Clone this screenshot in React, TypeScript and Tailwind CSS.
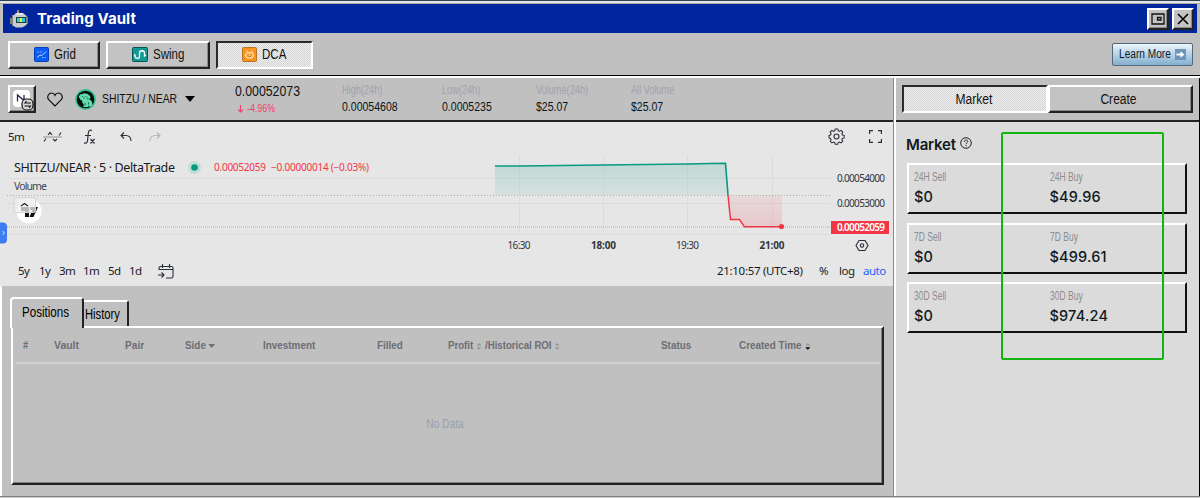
import type { ReactNode } from 'react';
import clsx from 'clsx';

const raised =
  'border-2 border-t-white border-l-white border-r-[#222] border-b-[#222] shadow-[inset_-1px_-1px_0_#8a8a8a] bg-[#c3c3c3]';
const pressed =
  'border-2 border-t-[#2b2b2b] border-l-[#2b2b2b] border-r-white border-b-white bg-[repeating-conic-gradient(#d2d2d2_0_25%,#f1f1f1_0_50%)] bg-[length:2px_2px]';
const pixel = 'font-["Liberation_Sans",Arial,sans-serif]';
// condensed look of the desktop font
const narrow = 'block origin-left scale-x-[0.8] whitespace-nowrap';

const stats = [
  { label: 'High(24h)', value: '0.00054608', width: 'w-[100px]' },
  { label: 'Low(24h)', value: '0.0005235', width: 'w-[94px]' },
  { label: 'Volume(24h)', value: '$25.07', width: 'w-[95px]' },
  { label: 'All Volume', value: '$25.07', width: 'w-[95px]' },
];

const markets = [
  { period: '24H', sell: '$0', buy: '$49.96' },
  { period: '7D', sell: '$0', buy: '$499.61' },
  { period: '30D', sell: '$0', buy: '$974.24' },
];

const ranges = [
  { label: '5y', width: 'w-[21px]' },
  { label: '1y', width: 'w-[20px]' },
  { label: '3m', width: 'w-[24px]' },
  { label: '1m', width: 'w-[25px]' },
  { label: '5d', width: 'w-[21px]' },
  { label: '1d', width: 'w-[29px]' },
];

function RobotIcon() {
  return (
    <svg width="20" height="20" viewBox="0 0 20 20">
      <path d="M8 2h2v3H8z" fill="#9a9f9e" />
      <path d="M8 1h2v2H8z" fill="#e0755c" />
      <path d="M1 9h2V6h2v11H3v-2H1z" fill="#7f8584" />
      <path d="M7 4h7l3 2.500 1.500 2v6L16 17l-3 1.500H7L4 16.500V7z" fill="#c9cccb" />
      <path d="M8 4h5l2 1.500H7z" fill="#eef0ef" />
      <path d="M7 8h10.500v6H7z" fill="#17413f" />
      <path d="M8 9h3v4H8z" fill="#3fc9b8" />
      <path d="M11 9h2v4h-2z" fill="#f1e64a" />
      <path d="M13 9h3v4h-3z" fill="#27c0dd" />
    </svg>
  );
}

function GridIcon() {
  return (
    <svg width="15" height="15" viewBox="0 0 15 15">
      <rect x=".5" y=".5" width="14" height="14" rx="1" fill="#0b5cf4" stroke="#073fb8" />
      <path d="M3 10.500l3-2.500 2 .5 4-4" fill="none" stroke="#c4dcff" />
      <path d="M3 5h2M6 5h2M8 10.500h2M11 10.500h1" fill="none" stroke="#7eaeff" />
    </svg>
  );
}

function SwingIcon() {
  return (
    <svg width="16" height="15" viewBox="0 0 16 15">
      <rect x=".5" y=".5" width="15" height="14" rx="1" fill="#119994" stroke="#075653" />
      <path d="M2 8h1v1.500C3.500 12 7.500 12 7.500 9.500V6c0-3 5-3 5 0v3l1.500-1" fill="none" stroke="#fff" strokeWidth="1.3" />
    </svg>
  );
}

function DcaIcon() {
  return (
    <svg width="15" height="15" viewBox="0 0 15 15">
      <rect x=".5" y=".5" width="14" height="14" rx="1" fill="#f8941d" stroke="#b67525" />
      <path d="M5 5.500h5l1.500 1.500v2.500L10 11H5L3.500 9.500V7zM5 5V3.500M10 5V3.500" fill="#fbb765" stroke="#ffe2b8" />
      <path d="M6 7v1.500M9 7v1.500M6 9.500h3" stroke="#e67c07" fill="none" />
    </svg>
  );
}

function ShitzuIcon() {
  return (
    <svg width="21" height="21" viewBox="0 0 21 21">
      <circle cx="10.5" cy="10.5" r="9.6" fill="#06110f" stroke="#35c08f" strokeWidth="1.6" />
      <path d="M3.500 8L5 5.500 7.500 5l2-.8 3 .8L15 7l.5 2-1.500 1 2.500 2 .8 2v3l-3 .8-.3-1.300-1 1.500H8l1-2-1.500-2L7 11.500 5.500 11 4.500 9z" fill="#62dca9" />
      <path d="M7 7.500h1M10.500 7.500h1M8.500 9h1.500M12.500 8.500l.5 2M10 14v2.500M13.500 13.500v2" stroke="#0b4836" strokeWidth=".8" fill="none" />
    </svg>
  );
}

function ToolButton({ icon, children, active, className, labelClass }: { icon: ReactNode; children: ReactNode; active?: boolean; className: string; labelClass: string }) {
  return (
    <button className={clsx('flex h-[28px] items-center justify-center gap-[5px] text-[15px] text-[#111]', pixel, active ? pressed : raised, className)}>
      {icon}
      <span className={clsx('block origin-left scale-x-[0.77] whitespace-nowrap', labelClass)}>{children}</span>
    </button>
  );
}

function Sorter({ active }: { active?: boolean }) {
  return (
    <svg className="mx-1 inline-block" width="6" height="7" viewBox="0 0 5 7" preserveAspectRatio="none">
      <path d="M0 2.5L2.5 0 5 2.5z" fill="#96969c" />
      <path d="M0 4.2L2.5 6.8 5 4.2z" fill={active ? '#000' : '#96969c'} />
    </svg>
  );
}

function TitleBar() {
  return (
    <div className="mr-[3px] ml-[3px] flex h-[29px] shrink-0 items-center bg-[#00259d] pr-[3px] pl-[6px]">
      <RobotIcon />
      <h1 className="ml-2 pt-[1px] font-['Inter',sans-serif] text-[15px] font-bold tracking-[0.1px] text-white">Trading Vault</h1>
      <button className={clsx('ml-auto flex h-[22px] w-[22px] items-center justify-center', raised)}>
        <svg width="14" height="12" viewBox="0 0 14 12" fill="none" stroke="#111" strokeWidth="1.3">
          <path d="M1 1h12v10H1z" />
          <path d="M6.5 4.5h3.5v2.5H6.5z" />
        </svg>
      </button>
      <button className={clsx('ml-[3px] flex h-[22px] w-[22px] items-center justify-center', raised)}>
        <svg width="12" height="12" viewBox="0 0 12 12" stroke="#000" strokeWidth="1.6">
          <path d="M1 1l10 10M11 1L1 11" />
        </svg>
      </button>
    </div>
  );
}

function PairBar() {
  return (
    <div className={clsx('flex h-[42px] items-center bg-[#c0c0c0] pl-2', pixel)}>
      <button className={clsx('flex h-[28px] w-[28px] items-center justify-center', raised)}>
        <svg width="24" height="24" viewBox="0 0 24 24">
          <rect x="3" y="3" width="17" height="17" rx="4" fill="#fff" />
          <path d="M7.500 14.500V8l6.500 5.500V8" fill="none" stroke="#25234c" strokeWidth="1.3" />
          <rect x="12" y="12" width="11" height="11" rx="4.500" fill="#d6d6d6" stroke="#111" strokeWidth="1.2" />
          <path d="M21 16h-6l1.500-2M14.500 19h6L19 21" fill="none" stroke="#111" strokeWidth="1.1" />
        </svg>
      </button>
      <svg className="ml-[11px]" width="16" height="15" viewBox="0 0 16 15" fill="none" stroke="#111" strokeWidth="1.2">
        <path d="M8 14L1.500 7.500C-.5 4 2 1 4.500 1 6 1 7.500 2 8 3.200 8.500 2 10 1 11.500 1 14 1 16.500 4 14.500 7.500z" />
      </svg>
      <div className="ml-[12px]"><ShitzuIcon /></div>
      <div className="ml-[6px] w-[83px] text-[13px] text-[#111]">
        <span className={narrow}>SHITZU / NEAR</span>
      </div>
      <svg width="10" height="6" viewBox="0 0 10 6"><path d="M0 0h10L5 6z" /></svg>
      <div className="ml-[40px] w-[107px] shrink-0 pt-[1px]">
        <div className="text-[15px] leading-[18px] text-[#111]">
          <span className="block origin-left scale-x-[0.82] whitespace-nowrap">0.00052073</span>
        </div>
        <div className="flex items-center pl-[3px] text-[11.5px] leading-[17px] text-[#f0406c]">
          <svg className="mr-[4px]" width="5" height="8" viewBox="0 0 5 8" fill="none" stroke="currentColor" strokeWidth="1.2"><path d="M2.500 0v7M0 4.500L2.500 7 5 4.500" /></svg>
          <span className="block origin-left scale-x-[0.77] whitespace-nowrap">-4.96%</span>
        </div>
      </div>
      {stats.map((s) => (
        <div key={s.label} className={s.width}>
          <div className="text-[12px] leading-[15px] text-[#a2a2aa]"><span className="block origin-left scale-x-[0.765] whitespace-nowrap">{s.label}</span></div>
          <div className="text-[13px] leading-[17px] text-[#0b1419]"><span className="block origin-left scale-x-[0.81] whitespace-nowrap">{s.value}</span></div>
        </div>
      ))}
    </div>
  );
}

function PriceChart() {
  return (
    <svg className="block font-['Noto_Sans',sans-serif]" width="893" height="102" viewBox="0 154 893 102">
      <defs>
        <linearGradient id="up" x1="0" y1="0" x2="0" y2="1">
          <stop offset="0" stopColor="#089981" stopOpacity=".17" />
          <stop offset="1" stopColor="#089981" stopOpacity=".07" />
        </linearGradient>
        <linearGradient id="down" x1="0" y1="0" x2="0" y2="1">
          <stop offset="0" stopColor="#f23645" stopOpacity=".07" />
          <stop offset="1" stopColor="#f23645" stopOpacity=".17" />
        </linearGradient>
      </defs>
      <path d="M7 178.500h823M7 203.500h823M7 234.500h823M519.500 155v79M603.500 155v79M687.500 155v79M772.500 155v79" stroke="#dcdcde" fill="none" />
      <path d="M495 166L603 165 687 164 726 163 728 195H495z" fill="url(#up)" />
      <path d="M728 195h54v32h-38l-5-7h-9z" fill="url(#down)" />
      <path d="M7 195.500h823" stroke="#acacac" strokeDasharray="1 2" />
      <path d="M7 227h823" stroke="#f4777f" strokeDasharray="1 1" opacity=".75" />
      <path d="M495 166h25l83-1 84-1 23-.5 15.500-.3L728 195" fill="none" stroke="#089981" strokeWidth="1.6" />
      <path d="M728 195l2.500 24.500h9l5 7.300H782" fill="none" stroke="#f23645" strokeWidth="1.5" />
      <circle cx="781.500" cy="226.500" r="2.600" fill="#f23645" />
      <g fill="#33353b" fontSize="10">
        <text x="837" y="182" textLength="48">0.00054000</text>
        <text x="837" y="207" textLength="48">0.00053000</text>
        <text x="507.500" y="249" textLength="23">16:30</text>
        <text x="591" y="249" textLength="25" fontWeight="700">18:00</text>
        <text x="676" y="249" textLength="23">19:30</text>
        <text x="759.500" y="249" textLength="25" fontWeight="700">21:00</text>
      </g>
      <rect x="831" y="221" width="58" height="13" fill="#f23645" />
      <text x="837" y="231" textLength="48" fontSize="10" fontWeight="600" fill="#fff">0.00052059</text>
      <g fill="none" stroke="#2a2e39" strokeWidth="1.1">
        <path d="M859 240.500h6l3 5-3 5h-6l-3-5z" />
        <circle cx="862" cy="245.500" r="1.700" />
      </g>
      <g fontSize="12.500" fill="#171a24">
        <text x="14" y="172" textLength="161">SHITZU/NEAR · 5 · DeltaTrade</text>
        <text x="14" y="190" textLength="33" fontSize="10.500" fill="#454750">Volume</text>
      </g>
      <circle cx="194.500" cy="167.500" r="6.500" fill="#c3ded6" />
      <circle cx="194.500" cy="167.500" r="3.300" fill="#089981" />
      <g fontSize="10" fill="#f23645">
        <text x="214" y="171" textLength="52">0.00052059</text>
        <text x="271" y="171" textLength="98">−0.00000014 (−0.03%)</text>
      </g>
      <circle cx="29" cy="211" r="12.500" fill="#fff" />
      <path d="M21 207h8v10h-4v-6h-4zM33.500 207H38l-4.500 10h-4zM30 207h3v3h-3z" fill="#111" />
      <rect x="14" y="197.500" width="21.500" height="15" rx="2" fill="#eee" fillOpacity=".75" stroke="#d4d4d8" />
      <path d="M21 206l3.500-2.500L28 206" fill="none" stroke="#222" strokeWidth="1.2" />
      <rect x="-4" y="222.500" width="11" height="21" rx="4" fill="#3d7bf3" />
      <path d="M2.500 231l2 2-2 2" fill="none" stroke="#fff" strokeWidth=".8" />
    </svg>
  );
}

function ChartPanel() {
  return (
    <div className="flex h-[164px] flex-col bg-[#e6e6e6] font-['Noto_Sans',sans-serif] text-[#171a24]">
      <div className="flex h-[32px] items-center pb-[3px] pl-2">
        <span className="w-[35px] text-[11.5px] tracking-[-0.7px]">5m</span>
        <svg width="19" height="12" viewBox="0 0 19 12" fill="none" stroke="#2a2e39" strokeWidth="1.1">
          <path d="M0 6h19" stroke="#999" />
          <path d="M1 10.500l2-3M5 4l2-2.500L9 4M10 8l2 2 2-2M16 4.500l2-3" />
        </svg>
        <svg className="ml-[21px]" width="13" height="16" viewBox="0 0 13 16" fill="none" stroke="#2a2e39" strokeWidth="1.2">
          <path d="M9 1.500C6.500.5 5.500 2 5.300 4L4.500 12c-.3 2-1.500 2.500-3.500 2M2 6.500h6M7.500 10l4 4.500M11.500 10l-4 4.500" />
        </svg>
        <svg className="ml-[24px]" width="12" height="10" viewBox="0 0 12 10" fill="none" stroke="#2a2e39" strokeWidth="1.1">
          <path d="M4 .5L1 3.500l3 3M1 3.500h5c3 0 5 2 5 5.500" />
        </svg>
        <svg className="ml-[17px]" width="12" height="10" viewBox="0 0 12 10" fill="none" stroke="#b5b6ba" strokeWidth="1.1">
          <path d="M8 .5l3 3-3 3M11 3.500H6C3 3.500 1 5.500 1 9" />
        </svg>
        <svg className="ml-auto" width="17" height="17" viewBox="0 0 18 18" fill="none" stroke="#2a2e39" strokeWidth="1.2">
          <path d="M7.500 1h3l.5 2 1.500.7 1.900-1.100 2 2-1.100 1.900.7 1.500 2 .5v3l-2 .5-.7 1.500 1.100 1.900-2 2-1.900-1.100-1.500.7-.5 2h-3l-.5-2-1.500-.7-1.900 1.100-2-2 1.100-1.900L2 12l-1.800-.5v-3L2 8l.7-1.500-1.100-1.900 2-2 1.900 1.100L7 3z" transform="translate(.9 .2) scale(.9)" />
          <circle cx="9" cy="9" r="2.600" />
        </svg>
        <svg className="mr-[11px] ml-[24px]" width="13" height="13" viewBox="0 0 13 13" fill="none" stroke="#2a2e39" strokeWidth="1.2">
          <path d="M.6 4V.6H4M9 .6h3.400V4M12.400 9v3.400H9M4 12.400H.6V9" />
        </svg>
      </div>
      <PriceChart />
      <div className="flex h-[30px] items-center pl-[18px] text-[11.5px] tracking-[-0.6px]">
        {ranges.map((r) => <span key={r.label} className={r.width}>{r.label}</span>)}
        <svg width="16" height="15" viewBox="0 0 16 15" fill="none" stroke="#2a2e39" strokeWidth="1.1">
          <path d="M1 6V4c0-1 .5-1.500 1.500-1.500h11c1 0 1.500.5 1.500 1.500v8.500c0 1-.5 1.500-1.500 1.500H8M4.500 0v4M11.500 0v4M1 5.500h14M0 11h6M3.500 8.500L6 11l-2.500 2.500" />
        </svg>
        <span className="ml-auto w-[102px] tracking-[-0.3px]">21:10:57 (UTC+8)</span>
        <span className="w-[20px]">%</span>
        <span className="w-[24px] tracking-[-0.4px]">log</span>
        <span className="w-[30px] tracking-[-0.5px] text-[#2962ff]">auto</span>
      </div>
    </div>
  );
}

function Orders() {
  return (
    <div className={clsx('flex h-[211px] flex-col border-l-2 border-white bg-[#c0c0c0] pt-[11px] pl-[8px]', pixel)}>
      <div className="flex h-[29px] items-end">
        <div className="z-10 flex h-[31px] w-[74px] translate-y-[2px] items-center rounded-t-[4px] border-t-2 border-r-2 border-l-2 border-t-white border-r-[#222] border-l-white bg-[#c0c0c0] pb-[2px] pl-[10px] text-[14.5px]">
          <span className={narrow}>Positions</span>
        </div>
        <div className="flex h-[26px] w-[45px] items-center rounded-tr-[3px] border-t-2 border-r-2 border-t-white border-r-[#222] pl-[1px] text-[14px]">
          <span className={narrow}>History</span>
        </div>
      </div>
      <div className="ml-[1px] h-[159px] w-[873px] border-2 border-t-white border-r-[#222] border-b-[#222] border-l-white px-[2px] shadow-[inset_-1px_-1px_0_#808080]">
        <div className="flex h-[36px] items-center border-b-2 border-[#cfcfcf] pt-[2px] pl-[8px] text-[11.5px] font-bold text-[#6d6d75]">
          <div className="w-[31px]"><span className={narrow}>#</span></div>
          <div className="w-[71px]"><span className="block origin-left scale-x-[0.91] whitespace-nowrap">Vault</span></div>
          <div className="w-[60px]"><span className="block origin-left scale-x-[0.88] whitespace-nowrap">Pair</span></div>
          <div className="w-[78px]">
            <span className="block origin-left scale-x-[0.86] whitespace-nowrap">
              Side <svg className="inline-block" width="8" height="4" viewBox="0 0 8 4"><path d="M0 0h8L4 4z" fill="currentColor" /></svg>
            </span>
          </div>
          <div className="w-[114px]"><span className="block origin-left scale-x-[0.86] whitespace-nowrap">Investment</span></div>
          <div className="w-[71px]"><span className="block origin-left scale-x-[0.86] whitespace-nowrap">Filled</span></div>
          <div className="w-[213px]"><span className="block origin-left scale-x-[0.84] whitespace-nowrap">Profit<Sorter />/Historical ROI<Sorter /></span></div>
          <div className="w-[78px]"><span className="block origin-left scale-x-[0.86] whitespace-nowrap">Status</span></div>
          <div><span className="block origin-left scale-x-[0.86] whitespace-nowrap">Created Time<Sorter active /></span></div>
        </div>
        <div className="flex h-[119px] items-center justify-center pt-[1px] pr-[5px] text-[12.5px] text-[#99a0af]">
          <span className="block scale-x-[0.82]">No Data</span>
        </div>
      </div>
    </div>
  );
}

function MarketPanel() {
  return (
    <aside className="flex w-[305px] shrink-0 flex-col border-l-2 border-white shadow-[-1px_0_0_#888]">
      <div className={clsx('flex h-[42px] items-center pl-[6px] text-[14px] text-[#111]', pixel)}>
        <button className={clsx('h-[28px] w-[146px]', pressed)}><span className="block -translate-x-[1px] scale-x-[0.86]">Market</span></button>
        <button className={clsx('h-[28px] w-[145px] pr-1', raised)}><span className="block scale-x-[0.86]">Create</span></button>
      </div>
      <div className="flex h-[376px] flex-col border-t-2 border-[#222] bg-[#dbdbdb] pl-[11px]">
        <div className="ml-[-1px] flex h-[41px] items-center pt-[6px]">
          <h2 className="w-[54px] font-['Inter',sans-serif] text-[15px] font-semibold tracking-[-0.2px] text-[#111a1e]">Market</h2>
          <svg className="mb-[6px]" width="12" height="12" viewBox="0 0 12 12" fill="none" stroke="#222" strokeWidth="1">
            <circle cx="6" cy="6" r="5.300" />
            <path d="M4.300 4.800c0-2.300 3.400-2.300 3.400-.2C7.700 5.800 6 5.800 6 7.200M6 8.200v1" />
          </svg>
        </div>
        <div className="flex flex-col gap-[8.5px]">
          {markets.map((m) => (
            <div key={m.period} className="flex h-[51px] w-[280px] border-2 border-t-white border-r-[#111] border-b-[#111] border-l-white pt-[3px] pl-[5px]">
              {[['Sell', m.sell], ['Buy', m.buy]].map(([side, value]) => (
                <div key={side} className="w-[137px]">
                  <div className={clsx('text-[12px] leading-[18px] text-[#8b8b91]', pixel)}>
                    <span className="block origin-left scale-x-[0.71] whitespace-nowrap">{m.period} {side}</span>
                  </div>
                  <div className="font-['Inter','Liberation_Sans',sans-serif] text-[14.5px] leading-[21px] font-medium tracking-[0.2px] text-[#111a1e]">{value}</div>
                </div>
              ))}
            </div>
          ))}
        </div>
      </div>
    </aside>
  );
}

export default function App() {
  return (
    <div className="relative flex h-[498px] w-[1200px] flex-col overflow-hidden border-t border-[#34424f] bg-[#c0c0c0]">
      <div className="h-[3px] shrink-0 border-b border-[#a9a9a9] bg-[#e6e6e6]" />
      <TitleBar />
      <div className="flex h-[42px] shrink-0 items-center gap-[6px] px-2 pt-[1px]">
        <ToolButton icon={<GridIcon />} className="w-[92px]" labelClass="w-[21px]">Grid</ToolButton>
        <ToolButton icon={<SwingIcon />} className="w-[104px]" labelClass="w-[32px]">Swing</ToolButton>
        <ToolButton icon={<DcaIcon />} active className="w-[97px]" labelClass="w-[26px]">DCA</ToolButton>
        <button className={clsx('mr-[-1px] ml-auto flex h-[23px] w-[81px] items-center justify-center gap-[4px] rounded-[2px] border border-[#54697a] bg-gradient-to-b from-[#edf6fb] to-[#83afcf] text-[12.5px] text-[#0c1b29]', pixel)}>
          <span className="block w-[52px] origin-left scale-x-[0.81] whitespace-nowrap">Learn More</span>
          <svg className="shrink-0" width="11" height="11" viewBox="0 0 11 11">
            <rect width="11" height="11" fill="#6e94b8" />
            <path d="M1.500 4.500h4V2.300l4 3.200-4 3.200V6.500h-4z" fill="#fff" />
          </svg>
        </button>
      </div>
      <div className="h-[3px] shrink-0 border-t-[1.5px] border-black bg-white" />
      <div className="flex min-h-0 flex-1">
        <main className="w-[893px] shrink-0">
          <PairBar />
          <div className="h-[2px] bg-[#222]" />
          <ChartPanel />
          <Orders />
        </main>
        <div className="w-[1px] shrink-0 bg-[#c0c0c0]" />
        <MarketPanel />
        <div className="w-[1px] shrink-0 bg-black" />
      </div>
      <div className="h-[2px] shrink-0 border-t border-[#808080] bg-[#d0d0d0]" />
      {/* highlight frame over the buy column */}
      <div className="absolute top-[131px] left-[1001px] h-[228px] w-[163px] rounded-[2px] border-2 border-[#12b312]" />
    </div>
  );
}
